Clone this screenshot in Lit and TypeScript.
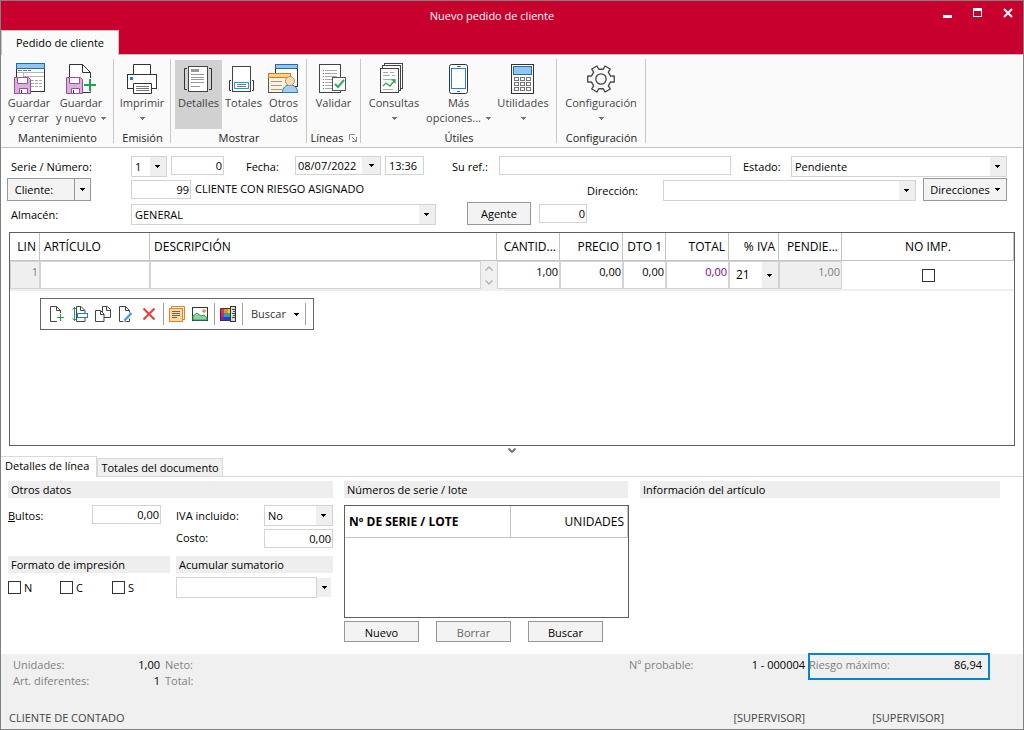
import { LitElement, html, css, svg, nothing } from "lit";
import { customElement, property } from "lit/decorators.js";
import { classMap } from "lit/directives/class-map.js";

const caret = html`<svg class="caret" viewBox="0 0 5 3" width="5" height="3" aria-hidden="true"><path d="M0 0h5v1h-1v1h-1v1h-1v-1h-1v-1h-1z" fill="currentColor" shape-rendering="crispEdges"/></svg>`;

const floppy = (x: number, y: number) => svg`<g transform="translate(${x} ${y})">
  <path d="M.5 .5H14.5L16.5 2.5V16.5H.5Z" fill="#dcb0dc" stroke="#994f99"/>
  <path d="M3.5 .5h10v6h-10z" fill="#fff" stroke="#994f99"/>
  <path d="M5.5 11.5h8v5h-8z" fill="#fff" stroke="#994f99"/>
  <path d="M7.5 13v3" stroke="#333"/></g>`;

const gear = () => {
  const pts: string[] = [];
  for (let i = 0; i < 6; i++) {
    const steps: [number, number][] = [[-13, 13.6], [13, 13.6], [17, 10], [43, 10]];
    for (const [deg, r] of steps) {
      const a = ((i * 60 + deg) * Math.PI) / 180;
      pts.push(`${(17 + r * Math.cos(a)).toFixed(2)},${(18 + r * Math.sin(a)).toFixed(2)}`);
    }
  }
  return svg`<polygon points=${pts.join(" ")} fill="#fafafa" stroke="#444" stroke-width="1.3" stroke-linejoin="round"/><circle cx="17" cy="18" r="5.2" fill="none" stroke="#444" stroke-width="1.3"/>`;
};

const bigIcons: Record<string, unknown> = {
  saveClose: svg`<rect x="4.5" y="2.5" width="28" height="28" fill="#fff" stroke="#333"/>
    <rect x="4.5" y="2.5" width="28" height="5" fill="#92c6ef" stroke="#1f6db3"/>
    <path d="M6 9.5h4M11 9.5h4M16 9.5h3" stroke="#777"/><path d="M5 11.5h27M11.5 12v4M11 15.5h21" stroke="#b5b5b5" fill="none"/>
    <path d="M19 19.5h12M19 22.5h12M19 25.5h12" stroke="#aaa" stroke-dasharray="3 1" fill="none"/>${floppy(2, 16)}`,
  saveNew: svg`<path d="M5.5 31.5v-28h13l8 8v20z" fill="#fff" stroke="#333"/><path d="M18.5 3.5v8h8" fill="none" stroke="#333"/>
    <path d="M22 17h13v15H22z" fill="#fafafa"/><path d="M26.5 12v5M21 31.5h5.5v-1" stroke="#333" fill="none"/>${floppy(2, 16)}
    <path d="M26 18v12M20 24h12" stroke="#14a94f" stroke-width="2"/>`,
  print: svg`<path d="M8.5 13.5v-10h17v10" fill="#fff" stroke="#333"/><rect x="2.5" y="13.5" width="29" height="19" fill="#fff" stroke="none"/><rect x="2.5" y="13.5" width="29" height="14" fill="#fff" stroke="#333"/>
    <rect x="5" y="16" width="3" height="3" fill="#1c86d1"/><path d="M8.5 22.5h18v10h-18z" fill="#fff" stroke="#333"/><path d="M11 25.5h13M11 27.5h13M11 29.5h13" stroke="#777"/>`,
  details: svg`<rect x="6.5" y="5.5" width="19" height="25" fill="#fff" stroke="#444"/><rect x="9" y="8" width="8" height="3" fill="#999"/>
    <path d="M9 13.5h13M9 16.5h13M9 18.5h13M9 21.5h13M9 25.5h9" stroke="#999"/><path d="M5 7.5H2.5v21H5M27 7.5h2.5v21H27" fill="none" stroke="#333"/>`,
  totals: svg`<rect x="5.5" y="5.5" width="18" height="25" fill="#fff" stroke="#444"/><path d="M7.5 21.5h14v6h-14z" fill="#fff" stroke="#1c9ad6"/>
    <path d="M10 23.5h9M10 25.5h9" stroke="#777"/><path d="M4 19.5H2.500v10H4M25 19.5h1.500v10H25" fill="none" stroke="#333"/>`,
  other: svg`<rect x="8.5" y="3.5" width="22" height="22" fill="#fff" stroke="#333"/><rect x="8.5" y="3.5" width="22" height="4" fill="#92c6ef" stroke="#1f6db3"/>
    <rect x="1.5" y="12.5" width="22" height="19" fill="#fdf1d6" stroke="#555"/><rect x="1.5" y="12.5" width="22" height="4" fill="#fbd28a" stroke="#e0752a"/>
    <path d="M4 20.5h11M4 24.5h11M4 28.5h11" stroke="#999"/><path d="M15.5 31.5c0-5 3-7.5 7.5-7.5s7.5 2.5 7.5 7.5z" fill="#a6cff0" stroke="#2b78b8"/><circle cx="23" cy="20" r="4.5" fill="#fbdcc0" stroke="#cf8a55"/>`,
  validate: svg`<rect x="2.5" y="3.5" width="21" height="28" fill="#fff" stroke="#444"/><path d="M8 9.5h12M8 12.5h12M8 15.5h12M8 18.5h7M8 21.5h7M8 24.5h7M8 27.5h7" stroke="#aaa"/>
    <path d="M6.5 9v20" stroke="#14a94f" stroke-dasharray="1 2"/><path d="M6.5 12v1M6.5 21v1" stroke="#c23"/>
    <rect x="15.5" y="16.5" width="13" height="13" fill="#fff" stroke="#555"/><path d="M18 23l3 3 6-7" fill="none" stroke="#2aae58" stroke-width="2"/>`,
  queries: svg`<rect x="7.5" y="2.5" width="18" height="25" fill="#fff" stroke="#444"/><rect x="5.5" y="4.5" width="18" height="25" fill="#fff" stroke="#444"/><rect x="3.5" y="7.5" width="18" height="24" fill="#fff" stroke="#444"/>
    <path d="M6 11.5h5m2 0h4M6 14.5h7m2 0h3" stroke="#aaa"/><path d="M6 18.5h12M6 28.5h10" stroke="#aaa"/><path d="M6 25l3-3 4 3 5-6M14.5 19H18v3.5" fill="none" stroke="#2fa84a" stroke-width="1.3"/>`,
  phone: svg`<rect x="7.5" y="3.5" width="18" height="29" rx="2" fill="#fff" stroke="#333"/><rect x="9.5" y="7.5" width="14" height="20" fill="#fff" stroke="#1c86d1"/><path d="M15 5.5h4M15 30.5h3" stroke="#666"/>`,
  calc: svg`<rect x="5.5" y="3.5" width="22" height="29" fill="#fff" stroke="#333"/><rect x="7.5" y="5.5" width="18" height="8" fill="#92c6ef" stroke="#1f6db3"/>
    <g fill="#fff" stroke="#777">${[16.5, 21.5, 26.5].map((y) => [8.5, 14.5, 20.5].map((x) => svg`<rect x=${x} y=${y} width="4" height="3"/>`))}</g>`,
  gear: gear(),
};

const smallIcons: Record<string, unknown> = {
  add: svg`<path d="M11.5 15.5h-10v-15h6l4 4z" fill="#fff"/><path d="M8 15.5H1.5v-15h6l4 4V7M7.5 .5v4h4" fill="none" stroke="#444"/><path d="M11.5 8v7M8 11.5h7" stroke="#14a94f"/>`,
  insert: svg`<path d="M4.5 15.5h8.500v-11l-4-4h-4.500z" fill="#fff" stroke="#444"/><path d="M8.5 .5v4h4" stroke="#444" fill="none"/><rect x="5.5" y="7.5" width="10" height="4" fill="#fff" stroke="#1f7fcb"/>
    <path d="M2.5 1v14M.5 3.5l2-2 2 2M.5 12.5l2 2 2-2" fill="none" stroke="#14a94f"/>`,
  copy: svg`<path d="M7.5 .5h5l3 3v8h-8z" fill="#fff" stroke="#444"/><path d="M11.5 .5v4h4" stroke="#444" fill="none"/><path d="M.5 4.5h5l3.500 3.500v7.500H.5z" fill="#fff" stroke="#444"/><path d="M5.5 4.5v4H9" stroke="#444" fill="none"/>`,
  edit: svg`<path d="M1.5 .5h6l4 4v11h-10z" fill="#fff" stroke="#444"/><path d="M7.5 .5v4h4" fill="none" stroke="#444"/><path d="M5 16l1-4 7-7 3 3-7 7z" fill="#fff"/><path d="M6.5 14.5l7-7.5" stroke="#4d9fe0" stroke-width="2.5"/>`,
  remove: svg`<path d="M2.5 2.5l11 11M13.5 2.5l-11 11" stroke="#ee3a3a" stroke-width="2"/>`,
  notes: svg`<path d="M2.5 2.5v-2h13v13h-2" fill="#fdf1d6" stroke="#e0822f"/><rect x=".5" y="2.5" width="13" height="13" fill="#fbd99b" stroke="#e0822f"/><path d="M3 5.5h8M3 7.5h8M3 9.5h8M3 11.5h5" stroke="#666"/>`,
  image: svg`<rect x=".5" y="1.5" width="15" height="13" fill="#fff" stroke="#333"/><circle cx="12" cy="5" r="1.8" fill="#f0874a"/><path d="M1 10l4-3 4 3 3-1 3 3v2H1z" fill="#8fd0a0" stroke="#2a9d58"/>`,
  palette: svg`<path d="M0 3h4v4H0z" fill="#e03a2e"/><path d="M4 3h4v4H4z" fill="#f28c1c"/><path d="M8 3h3v4H8z" fill="#f7d417"/><path d="M0 7h4v4H0z" fill="#d0208c"/><path d="M4 7h4v4H4z" fill="#1e9fe0"/><path d="M8 7h3v4H8z" fill="#35b04a"/><path d="M0 11h4v4H0z" fill="#7a2aa8"/><path d="M4 11h7v4H4z" fill="#2a3fc0"/>
    <path d="M.5 2.5h10v12H.5z" fill="none" stroke="#333"/><rect x="10.5" y=".5" width="5" height="15" fill="#ddd" stroke="#333"/><path d="M12 3.5h3M13 5.5h2M12 7.5h3M13 9.5h2M12 11.5h3" stroke="#444"/>`,
};

interface Command { icon: string; lines: string[]; width: string; drop?: boolean; active?: boolean; }
interface Group { title: string; cls: string; launcher?: boolean; items: Command[]; }

const groups: Group[] = [
  { title: "Mantenimiento", cls: "g-wide", items: [
    { icon: "saveClose", lines: ["Guardar", "y cerrar"], width: "w52" },
    { icon: "saveNew", lines: ["Guardar", "y nuevo"], width: "w52", drop: true } ] },
  { title: "Emisión", cls: "", items: [{ icon: "print", lines: ["Imprimir"], width: "w56", drop: true }] },
  { title: "Mostrar", cls: "g-pad", items: [
    { icon: "details", lines: ["Detalles"], width: "w47", active: true },
    { icon: "totals", lines: ["Totales"], width: "w43" },
    { icon: "other", lines: ["Otros", "datos"], width: "w37" } ] },
  { title: "Líneas", cls: "", launcher: true, items: [{ icon: "validate", lines: ["Validar"], width: "w53" }] },
  { title: "Útiles", cls: "g-pad", items: [
    { icon: "queries", lines: ["Consultas"], width: "w58", drop: true },
    { icon: "phone", lines: ["Más", "opciones..."], width: "w71", drop: true },
    { icon: "calc", lines: ["Utilidades"], width: "w58", drop: true } ] },
  { title: "Configuración", cls: "", items: [{ icon: "gear", lines: ["Configuración"], width: "w88", drop: true }] },
];

const base = css`
  * { box-sizing: border-box; }
  button, input, select { font: inherit; color: inherit; border-radius: 0; margin: 0; outline: none; }
  button { padding: 0; border: none; background: none; display: inline-flex; align-items: center; justify-content: center; white-space: nowrap; }
  .caret { flex: none; display: block; }
`;

@customElement("order-ribbon")
export class OrderRibbon extends LitElement {
  static styles = [base, css`
    :host { display: block; }
    .ribbon { display: flex; background: #fafafa; border-top: 1px solid #c3c3c3; border-bottom: 1px solid #c6c6c6; padding: 4px 0; color: #444; }
    .group { display: flex; flex-direction: column; border-right: 1px solid #c8c8c8; }
    .items { display: flex; padding-top: 1px; height: 73px; }
    .g-wide .items { padding-left: 2px; padding-right: 6px; }
    .g-pad .items { padding-left: 4px; padding-right: 4px; }
    .cmd { flex-direction: column; justify-content: flex-start; height: 69px; padding-top: 1px; line-height: 15px; }
    .cmd.active { background: #d1d1d1; }
    .icon { width: 34px; height: 34px; display: block; overflow: visible; }
    .line { display: flex; align-items: center; gap: 5px; height: 15px; }
    .line .caret { color: #777; margin-top: 1px; }
    .title { display: flex; justify-content: center; align-items: center; gap: 6px; line-height: 11px; padding-left: 1px; color: #222; }
    .w37 { width: 37px; } .w43 { width: 43px; } .w47 { width: 47px; } .w52 { width: 52px; } .w53 { width: 53px; }
    .w56 { width: 56px; } .w58 { width: 58px; } .w71 { width: 71px; } .w88 { width: 88px; }
  `];
  render() {
    return html`<div class="ribbon" role="toolbar">${groups.map((g) => html`
      <div class="group ${g.cls}">
        <div class="items">${g.items.map((c) => html`
          <button class=${classMap({ cmd: true, active: !!c.active, [c.width]: true })}>
            <svg class="icon" viewBox="0 0 34 34" aria-hidden="true">${bigIcons[c.icon]}</svg>
            <span class="line">${c.lines[0]}</span>
            ${c.lines[1] || c.drop ? html`<span class="line">${c.lines[1] ?? nothing}${c.drop ? caret : nothing}</span>` : nothing}
          </button>`)}</div>
        <div class="title">${g.title}${g.launcher ? html`<svg width="8" height="8" viewBox="0 0 8 8" aria-hidden="true"><path d="M.5 6V.5H6M3 3l4 4M7.5 3v4.500H3" fill="none" stroke="#888"/></svg>` : nothing}</div>
      </div>`)}</div>`;
  }
}

@customElement("line-toolbar")
export class LineToolbar extends LitElement {
  static styles = [base, css`
    :host { display: inline-flex; }
    .bar { display: flex; align-items: center; height: 32px; border: 1px solid #666; background: #fff; padding: 0 8px; gap: 6px; color: #333; }
    .sep { width: 1px; height: 22px; background: #a0a0a0; margin: 0 -1px; }
    .find { gap: 8px; padding: 0 1px 0 3px; }
    .find .caret { color: #000; }
    .icon { display: block; width: 17px; height: 16px; overflow: visible; }
  `];
  render() {
    const b = (icon: string, label: string) => html`<button aria-label=${label}><svg class="icon" viewBox="0 0 17 16" aria-hidden="true">${smallIcons[icon]}</svg></button>`;
    return html`<div class="bar" role="toolbar">
      ${b("add", "Nueva línea")}${b("insert", "Insertar línea")}${b("copy", "Duplicar línea")}${b("edit", "Editar línea")}${b("remove", "Borrar línea")}
      <span class="sep"></span>${b("notes", "Notas")}${b("image", "Imagen")}<span class="sep"></span>${b("palette", "Colores")}<span class="sep"></span>
      <button class="find">Buscar ${caret}</button><span class="sep"></span></div>`;
  }
}

@customElement("app-root")
export class AppRoot extends LitElement {
  @property() caption = "Nuevo pedido de cliente";

  static styles = [base, css`
    :host { display: block; font: 11px/16px "Open Sans", "Noto Sans", sans-serif; color: #000; }
    .window { display: flex; flex-direction: column; min-height: 100vh; border: 1px solid #808080; background: #fff; }
    .titlebar { background: #c8002d; display: grid; grid-template-columns: 1fr auto 1fr; grid-template-rows: 29px 24px; color: #fff; }
    .caption { grid-column: 2; align-self: center; padding-right: 40px; }
    .winbtns { display: flex; justify-content: flex-end; align-items: center; gap: 20px; padding: 0 10px 6px 0; }
    .ribbontab { grid-row: 2; grid-column: 1; justify-self: start; position: relative; z-index: 1; width: 118px; height: 25px; background: #fafafa; border: 1px solid #c3c3c3; border-bottom: none; color: #000; }

    .field { height: 19px; border: 1px solid #d3d3d3; background: #fff; padding: 0 3px; min-width: 0; }
    .num { text-align: right; padding: 0 1px; }
    .combo, .cell.combo { border: 1px solid #d3d3d3; appearance: none; min-width: 0;
      background: url("data:image/svg+xml,%3Csvg xmlns='http://www.w3.org/2000/svg' width='5' height='3'%3E%3Cpath d='M0 0h5v1h-1v1h-1v1h-1v-1h-1v-1h-1z'/%3E%3C/svg%3E") right 6px center no-repeat, linear-gradient(#efefef, #efefef) right / 16px 100% no-repeat, #fff; }
    .combo { height: 21px; padding: 0 18px 0 3px; }
    .push { height: 23px; border: 1px solid #989898; background: #f3f3f3; }
    .split { display: flex; }
    .drop { background: #efefef; width: 16px; }

    .form { display: flex; flex-direction: column; padding: 6px 16px 6px 6px; }
    .row { display: flex; align-items: flex-start; height: 24px; }
    .row .field, .row .combo, .row .split, .client { margin-top: 2px; }
    .row .split .field { margin-top: 0; }
    .row label { margin-top: 5px; white-space: nowrap; }
    .lead { width: 124px; padding-left: 4px; flex: none; }
    .ml4 { margin-left: 4px; }
    .date { margin-left: 2px; border: 1px solid #d3d3d3; height: 19px; width: 86px; }
    .row .date .field { border: none; height: 17px; flex: 1; padding: 0 2px; }
    .date .drop { width: 18px; }
    .lbl-date { width: 69px; padding-left: 22px; }
    .lbl-ref { width: 75px; padding-left: 28px; }
    .lbl-state { width: 60px; padding-left: 12px; }
    .w36 { width: 36px; } .w39 { width: 39px; } .w48 { width: 48px; } .w53 { width: 53px; } .w60 { width: 60px; } .w69 { width: 69px; }
    .w216 { width: 216px; } .w305 { width: 305px; } .grow { flex: 1; }
    .clientbtn { flex: none; width: 124px; }
    .clientbtn .push:first-child { width: 68px; padding-right: 14px; }
    .clientbtn .push:last-child { width: 17px; margin-left: -1px; }
    .row .clientbtn { margin-top: 0; }
    .client { line-height: 18px; margin-left: 4px; width: 392px; white-space: nowrap; }
    .lbl-dir { width: 76px; }
    .addr { width: 253px; flex: 1; }
    .dirs { width: 84px; margin-left: 7px; gap: 5px; }
    .agent { width: 64px; margin: 0 8px 0 31px; }

    .gridbox { margin: 0 8px; border: 1px solid #606060; flex: 1; min-height: 120px; }
    table { border-collapse: separate; border-spacing: 0; width: 100%; table-layout: fixed; font-size: 12px; }
    th { font-weight: 400; text-align: left; padding: 0 3px 0 4px; border-right: 1px solid #c4c4c4; border-bottom: 1px solid #c4c4c4; height: 28px; white-space: nowrap; overflow: hidden; }
    th.r { text-align: right; }
    th.c { text-align: center; }
    td { padding: 0; height: 30px; border-bottom: 2px solid #efefef; vertical-align: top; }
    .cell { width: 100%; height: 28px; border: 1px solid #d3d3d3; background: #fff; padding: 0 1px 8px 1px; display: block; font-size: 11px; }
    .cell.r { text-align: right; }
    .cell.off { background: #efefef; color: #808080; }
    .cell.purple { color: #800080; }
    .cell.combo { padding: 0 16px 0 6px; font-size: 12px; }
    .desc { display: flex; }
    .desc .cell { flex: 1; min-width: 0; }
    .spin { display: flex; flex-direction: column; width: 16px; height: 28px; background: #f0f0f0; }
    .spin button { flex: 1; }
    .c30 { width: 30px; } .c110 { width: 110px; } .c63 { width: 63px; } .c43 { width: 43px; } .c50 { width: 50px; } .c172 { width: 172px; }
    .tick { appearance: none; width: 13px; height: 13px; border: 1px solid #333; background: #fff; flex: none; display: block; }
    .tickcell { display: flex; justify-content: center; align-items: center; height: 28px; }
    line-toolbar { margin: 7px 0 0 30px; }
    .splitter { display: flex; justify-content: center; align-items: center; height: 10px; padding-bottom: 1px; }

    .tabs { display: flex; align-items: flex-end; height: 21px; border-bottom: 1px solid #d9d9d9; }
    .tab { height: 18px; border: 1px solid #d9d9d9; border-bottom: none; background: #f0f0f0; padding: 0 3px; }
    .tab.on { height: 21px; background: #fff; border-left: none; margin-bottom: -1px; padding: 0 7px 2px 4px; }

    .panel { display: grid; grid-template-columns: 325px 285px 1fr; column-gap: 11px; padding: 4px 23px 12px 7px; }
    .sect { background: #eee; height: 17px; line-height: 17px; padding-left: 3px; margin: 0; font-size: 11px; font-weight: 400; }
    .left { display: grid; grid-template-columns: 162px 1fr; column-gap: 6px; align-content: start; }
    .full { grid-column: 1 / -1; }
    .line { display: flex; align-items: flex-start; height: 24px; }
    .line label { margin-top: 3px; flex: 1; }
    .line + .line label { margin-top: 1px; }
    .body { padding-top: 7px; }
    .bultos { padding-right: 9px; }
    .gap { margin-top: 3px; }
    .checks { display: flex; padding-top: 8px; }
    .check { display: flex; gap: 3px; align-items: center; height: 13px; width: 52px; }
    .accum { padding-top: 4px; }
    .accum .field { height: 21px; width: 141px; }
    .accum .drop { height: 19px; width: 14px; margin-top: 1px; }
    .lots { border: 1px solid #606060; height: 113px; margin-top: 7px; }
    .lots th { height: 32px; }
    .lots .bold { font-weight: 700; }
    .c166 { width: 166px; }
    .btns { display: flex; gap: 17px; margin-top: 3px; }
    .btns .push { height: 21px; width: 75px; padding-top: 2px; }
    .dim { color: #666; }
    .midsect { margin-right: 1px; }

    .status { background: #f0f0f0; height: 75px; display: flex; flex-direction: column; justify-content: space-between; color: #808080; font-size: 11px; }
    .totals { display: flex; padding-left: 12px; }
    .totals dl { margin: 3px 0 0; display: grid; grid-template-columns: 90px 57px; line-height: 16px; }
    dt, dd { margin: 0; white-space: nowrap; }
    dd { color: #000; text-align: right; }
    .totals .net { grid-template-columns: 60px; margin-left: 5px; flex: 1; }
    .totals .prob { grid-template-columns: 90px 86px; margin-right: 3px; }
    .totals .risk { grid-template-columns: 1fr auto; align-content: start; width: 182px; height: 27px; border: 2px solid #0a84c8; margin: -1px 33px 0 0; padding: 2px 6px 0 0; }
    .risk dt { margin-left: -1px; }
    .users { display: flex; padding: 0 79px 3px 8px; color: #444; }
    .users span:first-child { flex: 1; }
    .users span:last-child { margin-left: 67px; }
    .u { text-decoration: underline; }
  `];

  private grid() {
    return html`<table>
      <colgroup><col class="c30"><col class="c110"><col><col class="c63"><col class="c63"><col class="c43"><col class="c63"><col class="c50"><col class="c63"><col class="c172"></colgroup>
      <thead><tr><th class="r">LIN</th><th>ARTÍCULO</th><th>DESCRIPCIÓN</th><th class="r">CANTID...</th><th class="r">PRECIO</th><th class="r">DTO 1</th><th class="r">TOTAL</th><th class="r">% IVA</th><th class="r">PENDIE...</th><th class="c">NO IMP.</th></tr></thead>
      <tbody><tr>
        <td><input class="cell r off" aria-label="Línea" value="1" readonly></td>
        <td><input class="cell" aria-label="Artículo"></td>
        <td><div class="desc"><input class="cell" aria-label="Descripción"><div class="spin">
          <button aria-label="Subir"><svg width="8" height="5" viewBox="0 0 8 5"><path d="M.5 4.500L4 1l3.500 3.500" fill="none" stroke="#b5b5b5" stroke-width="1.500"/></svg></button>
          <button aria-label="Bajar"><svg width="8" height="5" viewBox="0 0 8 5"><path d="M.5 .5L4 4 7.500 .5" fill="none" stroke="#b5b5b5" stroke-width="1.500"/></svg></button></div></div></td>
        <td><input class="cell r" aria-label="Cantidad" value="1,00"></td>
        <td><input class="cell r" aria-label="Precio" value="0,00"></td>
        <td><input class="cell r" aria-label="Descuento 1" value="0,00"></td>
        <td><input class="cell r purple" aria-label="Total" value="0,00"></td>
        <td><select class="cell combo" aria-label="% IVA"><option>21</option></select></td>
        <td><input class="cell r off" aria-label="Pendiente" value="1,00" readonly></td>
        <td><div class="tickcell"><input class="tick" type="checkbox" aria-label="No imprimir"></div></td>
      </tr></tbody></table>`;
  }

  render() {
    return html`<div class="window">
      <header class="titlebar">
        <span class="caption">${this.caption}</span>
        <div class="winbtns">
          <button aria-label="Minimizar"><svg width="10" height="10" viewBox="0 0 10 10"><path d="M0 7h9v3H0z" fill="#fff"/></svg></button>
          <button aria-label="Maximizar"><svg width="10" height="10" viewBox="0 0 10 10"><path d="M0 0h9v9H0zM1 3v5h7V3z" fill="#fff" fill-rule="evenodd"/></svg></button>
          <button aria-label="Cerrar"><svg width="10" height="10" viewBox="0 0 10 10"><path d="M1 1l8 8M9 1l-8 8" stroke="#fff" stroke-width="2"/></svg></button>
        </div>
        <button class="ribbontab">Pedido de cliente</button>
      </header>
      <order-ribbon></order-ribbon>

      <form class="form" @submit=${(e: Event) => e.preventDefault()}>
        <div class="row">
          <label class="lead" for="serie">Serie / Número:</label>
          <select class="combo w36" id="serie"><option>1</option></select>
          <input class="field num w53 ml4" aria-label="Número" value="0">
          <label class="lbl-date" for="fecha">Fecha:</label>
          <div class="split date"><input class="field" id="fecha" value="08/07/2022"><button type="button" class="drop" aria-label="Abrir calendario">${caret}</button></div>
          <input class="field w39 ml4" aria-label="Hora" value="13:36">
          <label class="lbl-ref" for="ref">Su ref.:</label>
          <input class="field grow" id="ref">
          <label class="lbl-state" for="estado">Estado:</label>
          <select class="combo w216" id="estado"><option>Pendiente</option></select>
        </div>
        <div class="row">
          <div class="split clientbtn"><button type="button" class="push">Cliente:</button><button type="button" class="push" aria-label="Opciones de cliente">${caret}</button></div>
          <input class="field num w60" aria-label="Cliente" value="99">
          <span class="client">CLIENTE CON RIESGO ASIGNADO</span>
          <label class="lbl-dir" for="dir">Dirección:</label>
          <select class="combo addr" id="dir"><option></option></select>
          <button type="button" class="push dirs">Direcciones ${caret}</button>
        </div>
        <div class="row">
          <label class="lead" for="almacen">Almacén:</label>
          <select class="combo w305" id="almacen"><option>GENERAL</option></select>
          <button type="button" class="push agent">Agente</button>
          <input class="field num w48" aria-label="Agente" value="0">
        </div>
      </form>

      <section class="gridbox">${this.grid()}<line-toolbar></line-toolbar></section>
      <div class="splitter"><svg width="8" height="5" viewBox="0 0 8 5"><path d="M.5 .5L4 4 7.500 .5" fill="none" stroke="#777" stroke-width="2"/></svg></div>

      <nav class="tabs"><button class="tab on">Detalles de línea</button><button class="tab">Totales del documento</button></nav>
      <section class="panel">
        <div class="left">
          <h2 class="sect full">Otros datos</h2>
          <div class="body bultos line"><label for="bultos"><span class="u">B</span>ultos:</label><input class="field num w69" id="bultos" value="0,00"></div>
          <div class="body">
            <div class="line"><label for="iva">IVA incluido:</label><select class="combo w69" id="iva"><option>No</option></select></div>
            <div class="line"><label for="costo">Costo:</label><input class="field num w69" id="costo" value="0,00"></div>
          </div>
          <h2 class="sect gap">Formato de impresión</h2>
          <h2 class="sect gap">Acumular sumatorio</h2>
          <div class="checks">${["N", "C", "S"].map((t) => html`<label class="check"><input class="tick" type="checkbox">${t}</label>`)}</div>
          <div class="accum split"><input class="field" aria-label="Acumular sumatorio"><button class="drop" aria-label="Desplegar">${caret}</button></div>
        </div>
        <div>
          <h2 class="sect midsect">Números de serie / lote</h2>
          <div class="lots"><table><colgroup><col class="c166"><col></colgroup><thead><tr><th class="bold">Nº DE SERIE / LOTE</th><th class="r">UNIDADES</th></tr></thead></table></div>
          <div class="btns"><button class="push">Nuevo</button><button class="push dim">Borrar</button><button class="push">Buscar</button></div>
        </div>
        <div><h2 class="sect">Información del artículo</h2></div>
      </section>

      <footer class="status">
        <div class="totals">
          <dl><dt>Unidades:</dt><dd>1,00</dd><dt>Art. diferentes:</dt><dd>1</dd></dl>
          <dl class="net"><dt>Neto:</dt><dt>Total:</dt></dl>
          <dl class="prob"><dt>Nº probable:</dt><dd>1 - 000004</dd></dl>
          <dl class="risk"><dt>Riesgo máximo:</dt><dd>86,94</dd></dl>
        </div>
        <div class="users"><span>CLIENTE DE CONTADO</span><span>[SUPERVISOR]</span><span>[SUPERVISOR]</span></div>
      </footer>
    </div>`;
  }
}
